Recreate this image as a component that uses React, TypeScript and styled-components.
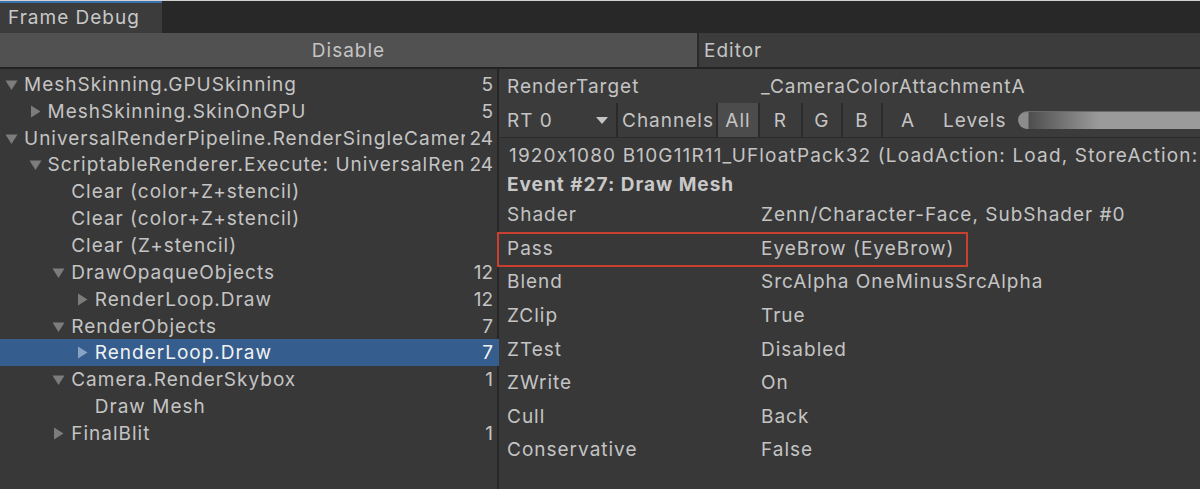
import styled, { createGlobalStyle } from 'styled-components';

const GlobalStyle = createGlobalStyle`
  html, body {
    margin: 0;
    padding: 0;
    background: #383838;
  }
  body {
    font-family: Inter, 'Noto Sans', sans-serif;
    font-size: 19px;
    letter-spacing: 1px;
    font-feature-settings: 'calt' 0;
    color: #c4c4c4;
    -webkit-font-smoothing: antialiased;
  }
`;

type TreeItem = {
  name: string;
  depth: number;
  count?: number;
  arrow?: 'open' | 'closed';
  selected?: boolean;
};

const tree: TreeItem[] = [
  { name: 'MeshSkinning.GPUSkinning', depth: 0, count: 5, arrow: 'open' },
  { name: 'MeshSkinning.SkinOnGPU', depth: 1, count: 5, arrow: 'closed' },
  { name: 'UniversalRenderPipeline.RenderSingleCamera', depth: 0, count: 24, arrow: 'open' },
  { name: 'ScriptableRenderer.Execute: UniversalRenderer', depth: 1, count: 24, arrow: 'open' },
  { name: 'Clear (color+Z+stencil)', depth: 2 },
  { name: 'Clear (color+Z+stencil)', depth: 2 },
  { name: 'Clear (Z+stencil)', depth: 2 },
  { name: 'DrawOpaqueObjects', depth: 2, count: 12, arrow: 'open' },
  { name: 'RenderLoop.Draw', depth: 3, count: 12, arrow: 'closed' },
  { name: 'RenderObjects', depth: 2, count: 7, arrow: 'open' },
  { name: 'RenderLoop.Draw', depth: 3, count: 7, arrow: 'closed', selected: true },
  { name: 'Camera.RenderSkybox', depth: 2, count: 1, arrow: 'open' },
  { name: 'Draw Mesh', depth: 3 },
  { name: 'FinalBlit', depth: 2, count: 1, arrow: 'closed' },
];

const props: { label: string; value: string; flagged?: boolean }[] = [
  { label: 'Shader', value: 'Zenn/Character-Face, SubShader #0' },
  { label: 'Pass', value: 'EyeBrow (EyeBrow)', flagged: true },
  { label: 'Blend', value: 'SrcAlpha OneMinusSrcAlpha' },
  { label: 'ZClip', value: 'True' },
  { label: 'ZTest', value: 'Disabled' },
  { label: 'ZWrite', value: 'On' },
  { label: 'Cull', value: 'Back' },
  { label: 'Conservative', value: 'False' },
];

const channels = [
  { name: 'All', width: 42, active: true },
  { name: 'R', width: 43 },
  { name: 'G', width: 40 },
  { name: 'B', width: 40 },
  { name: 'A', width: 52 },
];

const Arrow = ({ open, selected }: { open: boolean; selected?: boolean }) => (
  <svg width="13" height="13" viewBox="0 0 13 13">
    {open ? (
      <path d="M0.5 2.5 L12.5 2.5 L6.5 12 Z" fill="#7c7c7c" />
    ) : (
      <path d="M2 0.5 L11.5 6.5 L2 12.5 Z" fill={selected ? '#8aa2c4' : '#7c7c7c'} />
    )}
  </svg>
);

export default function App() {
  return (
    <>
      <GlobalStyle />
      <Window>
        <TabBar>
          <Tab>Frame Debug</Tab>
        </TabBar>
        <Toolbar>
          <DisableButton>Disable</DisableButton>
          <EditorPicker>Editor</EditorPicker>
        </Toolbar>
        <Body>
          <TreePanel>
            {tree.map((item, i) => (
              <TreeRow key={i} $depth={item.depth} $selected={item.selected}>
                <Toggle>{item.arrow && <Arrow open={item.arrow === 'open'} selected={item.selected} />}</Toggle>
                <TreeName>{item.name}</TreeName>
                <TreeCount>{item.count}</TreeCount>
              </TreeRow>
            ))}
          </TreePanel>
          <DetailPanel>
            <TargetHeader>
              <HeaderRow>
                <span>RenderTarget</span>
                <span>_CameraColorAttachmentA</span>
              </HeaderRow>
              <ChannelBar>
                <RtDropdown>
                  <span>RT 0</span>
                  <DropCaret />
                </RtDropdown>
                <BarLabel>Channels</BarLabel>
                {channels.map((c) => (
                  <ChannelButton key={c.name} $width={c.width} $active={c.active}>
                    {c.name}
                  </ChannelButton>
                ))}
                <LevelsLabel>Levels</LevelsLabel>
                <LevelsSlider />
              </ChannelBar>
            </TargetHeader>
            <InfoList>
              <InfoLine>1920x1080 B10G11R11_UFloatPack32 (LoadAction: Load, StoreAction: Store)</InfoLine>
              <EventTitle>Event #27: Draw Mesh</EventTitle>
              {props.map((p) => (
                <PropRow key={p.label} $flagged={p.flagged}>
                  <span>{p.label}</span>
                  <span>{p.value}</span>
                </PropRow>
              ))}
            </InfoList>
          </DetailPanel>
        </Body>
      </Window>
    </>
  );
}

const Window = styled.div`
  height: 489px;
  display: flex;
  flex-direction: column;
  border-top: 1px solid #d2d2d2;
  box-sizing: border-box;
  overflow: hidden;
`;

const TabBar = styled.div`
  height: 32px;
  flex: none;
  display: flex;
  background: #282828;
`;

const Tab = styled.div`
  width: 162px;
  box-sizing: border-box;
  padding-left: 8px;
  border-top: 2px solid #3a72b0;
  background: #3c3c3c;
  line-height: 30px;
  color: #c8c8c8;
`;

const Toolbar = styled.div`
  height: 36px;
  flex: none;
  display: flex;
  background: #3c3c3c;
  border-bottom: 2px solid #232323;
  box-sizing: border-box;
`;

const DisableButton = styled.div`
  width: 699px;
  box-sizing: border-box;
  background: #515151;
  border-right: 2px solid #2a2a2a;
  display: flex;
  align-items: center;
  justify-content: center;
`;

const EditorPicker = styled.div`
  flex: 1;
  display: flex;
  align-items: center;
  padding-left: 5px;
`;

const Body = styled.div`
  flex: 1;
  display: flex;
  min-height: 0;
`;

const TreePanel = styled.div`
  width: 499px;
  flex: none;
  box-sizing: border-box;
  padding-top: 2px;
  border-right: 2px solid #262626;
  background: #383838;
`;

const TreeRow = styled.div<{ $depth: number; $selected?: boolean }>`
  height: 26.85px;
  display: flex;
  align-items: center;
  padding-left: ${(p) => 5 + p.$depth * 23.6}px;
  background: ${(p) => (p.$selected ? '#355d8e' : 'transparent')};
  box-shadow: ${(p) => (p.$selected ? '3px 0 0 #355d8e' : 'none')};
  color: ${(p) => (p.$selected ? '#f2f2f2' : '#c4c4c4')};
`;

const Toggle = styled.span`
  width: 19px;
  flex: none;
  display: flex;
  align-items: center;
`;

const TreeName = styled.span`
  flex: 1;
  min-width: 0;
  overflow: hidden;
  white-space: nowrap;
`;

const TreeCount = styled.span`
  width: 28px;
  flex: none;
  text-align: right;
  padding-right: 4px;
  letter-spacing: 0;
`;

const DetailPanel = styled.div`
  flex: 1;
  min-width: 0;
  display: flex;
  flex-direction: column;
  background: #383838;
`;

const TargetHeader = styled.div`
  background: #3b3b3b;
  border-bottom: 1px solid #2b2b2b;
`;

const HeaderRow = styled.div`
  height: 34px;
  display: grid;
  grid-template-columns: 254px 1fr;
  align-items: center;
  padding-left: 8px;
  white-space: nowrap;
`;

const ChannelBar = styled.div`
  height: 34px;
  display: flex;
  align-items: stretch;
  white-space: nowrap;
`;

const RtDropdown = styled.div`
  width: 119px;
  box-sizing: border-box;
  padding: 0 8px;
  display: flex;
  align-items: center;
  justify-content: space-between;
  border-right: 2px solid #2a2a2a;
`;

const DropCaret = styled.span`
  width: 0;
  height: 0;
  border-left: 6px solid transparent;
  border-right: 6px solid transparent;
  border-top: 7px solid #c4c4c4;
`;

const BarLabel = styled.span`
  display: flex;
  align-items: center;
  padding: 0 2px 0 4px;
`;

const ChannelButton = styled.span<{ $width: number; $active?: boolean }>`
  width: ${(p) => p.$width}px;
  box-sizing: border-box;
  display: flex;
  align-items: center;
  justify-content: center;
  border-left: 2px solid #2b2b2b;
  background: ${(p) => (p.$active ? '#4c4c4c' : 'transparent')};
  &:last-of-type {
    border-right: 2px solid #2b2b2b;
  }
`;

const LevelsLabel = styled.span`
  display: flex;
  align-items: center;
  padding-left: 10px;
`;

const LevelsSlider = styled.div`
  flex: 1;
  align-self: center;
  height: 18px;
  margin-left: 12px;
  border-radius: 9px 0 0 9px;
  background: linear-gradient(
    to right,
    #8c8c8c 0,
    #8c8c8c 10px,
    #4e4e4e 11px,
    #9a9a9a 80px,
    #9a9a9a 100%
  );
  border-top: 1px solid #6a6a6a;
  box-sizing: border-box;
`;

const InfoList = styled.div`
  padding-top: 3px;
  display: flex;
  flex-direction: column;
`;

const InfoLine = styled.div`
  height: 29px;
  display: flex;
  align-items: center;
  padding-left: 10px;
  white-space: nowrap;
  overflow: hidden;
  letter-spacing: 1.15px;
`;

const EventTitle = styled.div`
  height: 28px;
  display: flex;
  align-items: center;
  padding-left: 8px;
  font-weight: 700;
  letter-spacing: 1px;
  color: #c8c8c8;
`;

const PropRow = styled.div<{ $flagged?: boolean }>`
  position: relative;
  height: 33.6px;
  display: grid;
  grid-template-columns: 254px 1fr;
  align-items: center;
  padding-left: 8px;
  white-space: nowrap;

  &::after {
    content: '';
    display: ${(p) => (p.$flagged ? 'block' : 'none')};
    position: absolute;
    left: -2px;
    top: 0;
    width: 471px;
    height: 35px;
    box-sizing: border-box;
    border: 2px solid #c9402f;
  }
`;
